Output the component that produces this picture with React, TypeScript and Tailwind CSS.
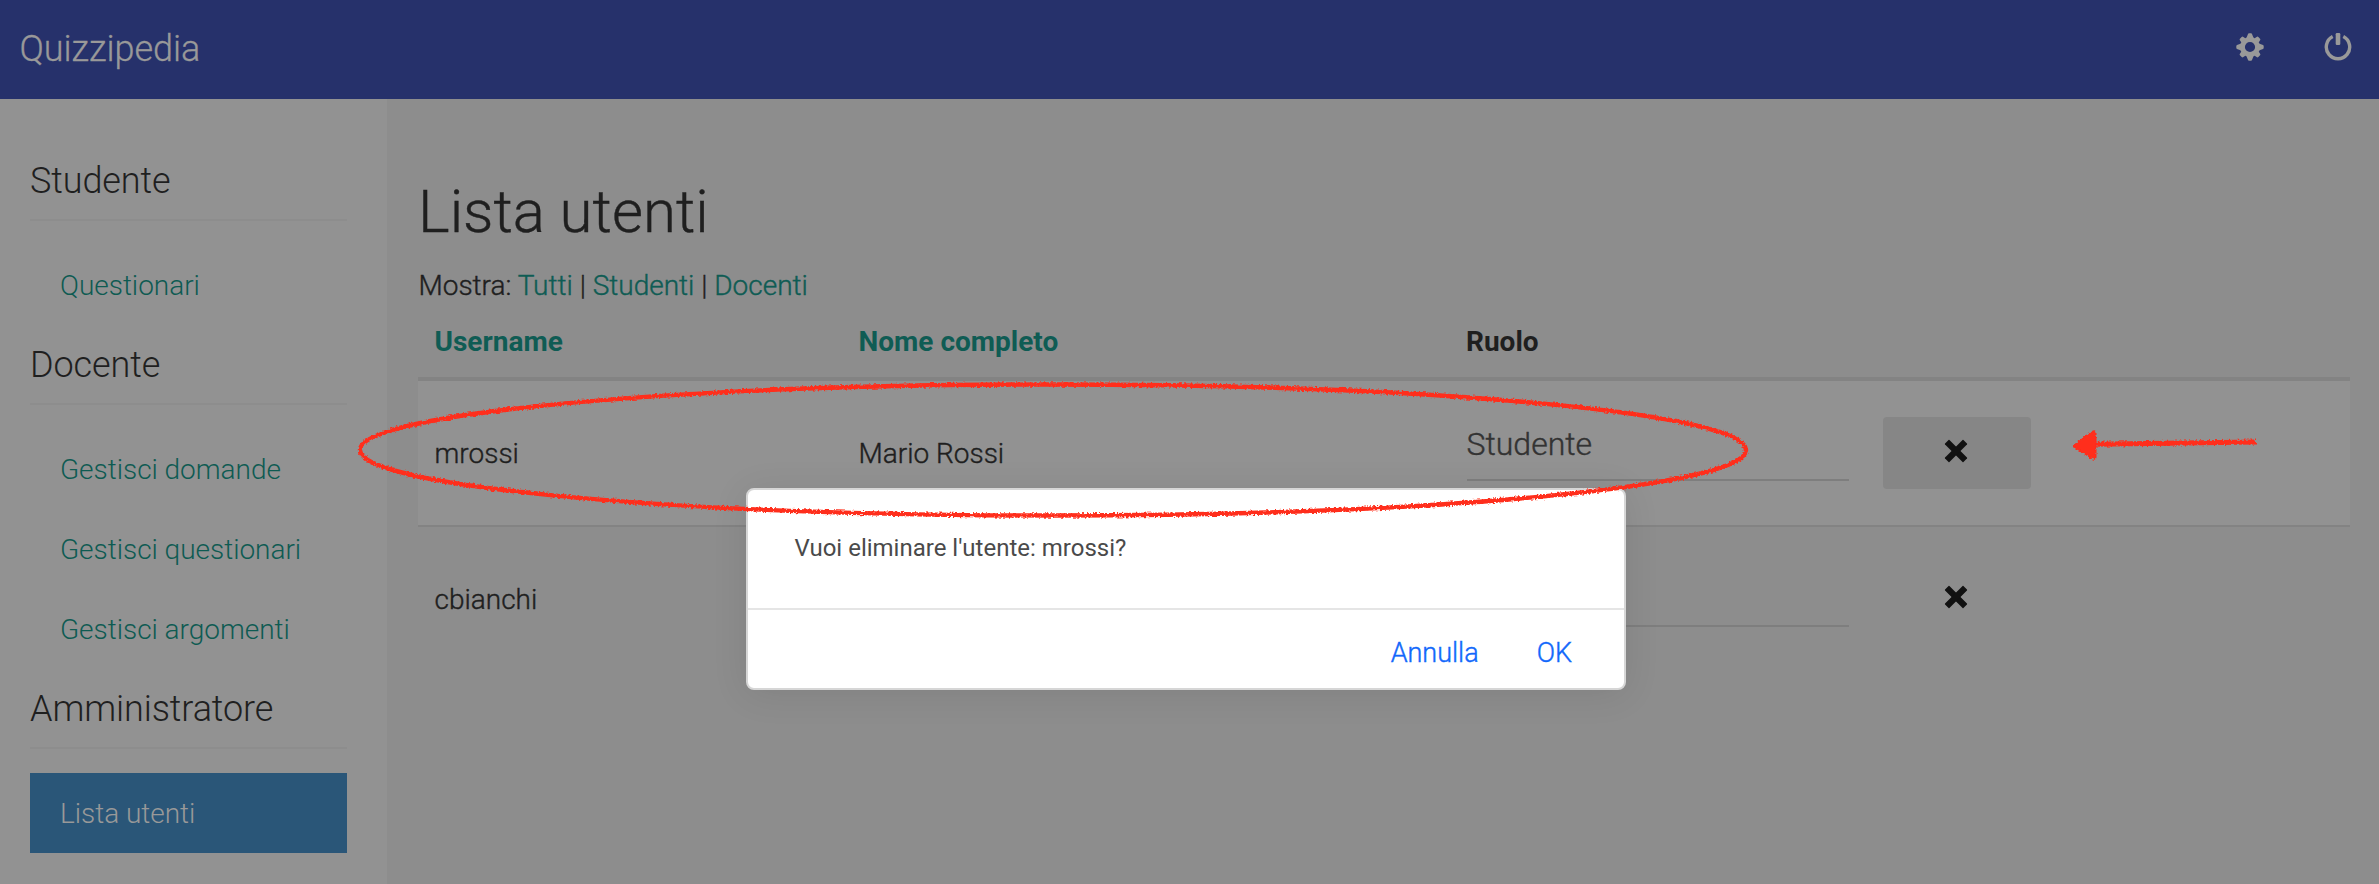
import type { ReactNode } from "react";

function GearIcon() {
  return (
    <svg width="28" height="28" viewBox="-14 -14 28 28" fill="currentColor" aria-hidden="true">
      <path
        fillRule="evenodd"
        d="M0-10a10 10 0 1 0 0 20a10 10 0 1 0 0-20ZM0-5.1a5.1 5.1 0 1 1 0 10.2a5.1 5.1 0 1 1 0-10.2Z"
      />
      {[0, 90, 180, 270].map((a) => (
        <path key={a} transform={`rotate(${a})`} d="M-3.6-9L-2-13Q-1.7-13.7-1-13.7H1Q1.7-13.7 2-13L3.6-9Z" />
      ))}
      {[45, 135, 225, 315].map((a) => (
        <path key={a} transform={`rotate(${a})`} d="M-3-9L-2.3-12.2Q-2-13 -1.2-13H1.2Q2-13 2.3-12.2L3-9Z" />
      ))}
    </svg>
  );
}

function PowerIcon() {
  return (
    <svg width="28" height="28" viewBox="-14 -14 28 28" fill="none" stroke="currentColor" aria-hidden="true">
      <path strokeWidth="3.4" d="M-5.3-10.4A11.7 11.7 0 1 0 5.3-10.4" />
      <rect x="-2.3" y="-14" width="4.6" height="12" rx="1.2" fill="currentColor" stroke="none" />
    </svg>
  );
}

function RemoveIcon() {
  return (
    <svg width="24" height="24" viewBox="-12 -12 24 24" fill="#111111" aria-hidden="true">
      <rect x="-13" y="-3.1" width="26" height="6.2" rx="0.6" transform="rotate(45)" />
      <rect x="-13" y="-3.1" width="26" height="6.2" rx="0.6" transform="rotate(-45)" />
    </svg>
  );
}

function NavSection({ title, items, active }: { title: string; items: string[]; active?: string }) {
  return (
    <section>
      <h2 className="h-[78px] text-4xl leading-[80px] font-light tracking-[-0.1px]">{title}</h2>
      <div className="mb-6 h-0.5 bg-[#8d8d8d]" />
      {items.map((item) => (
        <a
          key={item}
          className={
            item === active
              ? "block h-20 bg-[#2a5678] pl-[30px] text-[28px] leading-[82px] tracking-[-0.03px] text-[#999999]"
              : "block h-20 pl-[30px] text-[28px] leading-[82px] tracking-[-0.03px] text-[#0e5b52]"
          }
        >
          {item}
        </a>
      ))}
    </section>
  );
}

function FilterLink({ children }: { children: ReactNode }) {
  return <a className="text-[#0f5c54]">{children}</a>;
}

function UserRow({ username, name, role, active }: { username: string; name: string; role: string; active?: boolean }) {
  return (
    <div
      className={
        active
          ? "grid h-36 grid-cols-[424px_608px_417px_1fr] items-center bg-[#929292]"
          : "grid h-36 grid-cols-[424px_608px_417px_1fr] items-center"
      }
    >
      <div className="pt-0.5 pl-[16.5px]">{username}</div>
      <div className="pt-0.5 pl-[16.5px]">{name}</div>
      <div className="mt-7 ml-[17px] h-[72px] w-[382px] self-start border-b-2 border-[#7e7e7e] text-[32px] leading-[70px] text-[#333333]">
        <span className="-ml-[0.5px]">{role}</span>
      </div>
      <div className="pl-4">
        <button
          className={
            active
              ? "flex h-[72px] w-[148px] items-center justify-center rounded-[4px] bg-[#868686] pr-0.5 pb-1"
              : "flex h-[72px] w-[148px] items-center justify-center pr-0.5 pb-1"
          }
        >
          <RemoveIcon />
        </button>
      </div>
    </div>
  );
}

function Annotations() {
  return (
    <svg
      className="pointer-events-none absolute inset-0"
      width="2379"
      height="884"
      viewBox="0 0 2379 884"
      fill="none"
      stroke="#ff2d1a"
      aria-hidden="true"
    >
      <defs>
        <filter id="chalk" filterUnits="userSpaceOnUse" x="340" y="360" width="1960" height="180">
          <feTurbulence type="fractalNoise" baseFrequency="0.45" numOctaves="2" seed="4" result="noise" />
          <feDisplacementMap in="SourceGraphic" in2="noise" scale="4" xChannelSelector="R" yChannelSelector="G" />
        </filter>
      </defs>
      <g filter="url(#chalk)">
        <ellipse cx="1053" cy="450" rx="693" ry="65.5" strokeWidth="4.4" />
        <path d="M2094 444.3L2256 442" strokeWidth="5" />
        <path d="M2074 445L2091 432Q2096 429 2096 433V457Q2096 461 2091 458L2074 447Z" fill="#ff2d1a" strokeWidth="1" />
      </g>
    </svg>
  );
}

export default function App() {
  return (
    <div className="relative flex h-[884px] w-[2379px] flex-col overflow-hidden bg-[#8d8d8d] font-['Roboto',sans-serif] text-[28px] font-light text-[#1f1f1f]">
      <header className="flex h-[99px] items-center justify-between bg-[#26316b] pr-[27px] pb-px pl-[19.5px] text-[#999999]">
        <div className="text-4xl leading-10 tracking-[-0.06px] [-webkit-text-stroke:0.3px]">Quizzipedia</div>
        <div className="flex items-center gap-[60px] pb-1">
          <GearIcon />
          <PowerIcon />
        </div>
      </header>

      <div className="flex flex-1">
        <aside className="w-[387px] bg-[#929292] pt-[42px] pr-10 pl-[30px]">
          <NavSection title="Studente" items={["Questionari"]} />
          <NavSection title="Docente" items={["Gestisci domande", "Gestisci questionari", "Gestisci argomenti"]} />
          <NavSection title="Amministratore" items={["Lista utenti"]} active="Lista utenti" />
        </aside>

        <main className="flex-1 pt-20 pr-[29px] pl-[31px] [-webkit-text-stroke:0.4px]">
          <h1 className="mb-5 h-[66px] text-6xl leading-[66px] font-light">Lista utenti</h1>
          <p className="h-10 pl-[0.5px] leading-[42px]">
            Mostra: <FilterLink>Tutti</FilterLink> | <FilterLink>Studenti</FilterLink> | <FilterLink>Docenti</FilterLink>
          </p>

          <div className="grid h-19 grid-cols-[424px_608px_1fr] border-b-4 border-[#838383] leading-[74px] font-bold [-webkit-text-stroke:0px]">
            <a className="pl-[16.5px] text-[#0f5c54]">Username</a>
            <a className="pl-[16.5px] text-[#0f5c54]">Nome completo</a>
            <div className="pl-4">Ruolo</div>
          </div>
          <UserRow username="mrossi" name="Mario Rossi" role="Studente" active />
          <div className="h-0.5 bg-[#838383]" />
          <UserRow username="cbianchi" name="" role="" />
        </main>
      </div>

      <div
        role="dialog"
        className="absolute top-[488px] left-[746px] h-[202px] w-[880px] rounded-[8px] border-2 border-[#d6d6d6] bg-white shadow-[0_4px_36px_rgba(0,0,0,0.09)]"
      >
        <div className="h-[120px] border-b-2 border-[#e5e5e5] pt-10 pl-[46.5px] text-2xl leading-9 font-normal text-[#4a4a4a]">
          Vuoi eliminare l'utente: mrossi?
        </div>
        <div className="flex h-[78px] items-center justify-end gap-[58px] pt-2 pr-[52px] text-[27px] leading-10 text-[#1268fb] [-webkit-text-stroke:0.4px]">
          <button>Annulla</button>
          <button>OK</button>
        </div>
      </div>

      <Annotations />
    </div>
  );
}
